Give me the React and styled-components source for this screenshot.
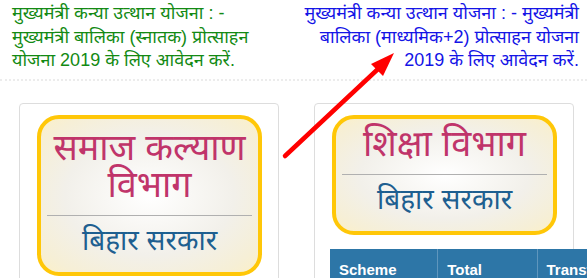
import React from "react";
import styled, { createGlobalStyle } from "styled-components";

const GlobalStyle = createGlobalStyle`
  html, body { margin: 0; padding: 0; background: #ffffff; }
  body { font-family: "Liberation Sans", "Noto Sans Devanagari", "Lohit Devanagari", "Noto Sans", sans-serif; }
`;

const Page = styled.div`
  position: relative;
  width: 587px;
  height: 278px;
  overflow: hidden;
  background: #fff;
`;

const NoticeRow = styled.div`
  display: grid;
  grid-template-columns: 278px 1fr;
  padding: 2px 8px 0 12px;
  height: 81px;
  box-sizing: border-box;
  border-bottom: 2px dotted #ececec;
`;

const Notice = styled.a`
  display: block;
  font-size: 18px;
  line-height: 23.5px;
  color: ${(p) => p.$color};
  text-align: ${(p) => p.$align};
  text-decoration: none;
  white-space: nowrap;
`;

const CardsRow = styled.div`
  display: flex;
  gap: 35px;
  padding: 22px 13px 0 19px;
`;

const Card = styled.div`
  width: 260px;
  box-sizing: border-box;
  border: 1px solid #dddddd;
  border-radius: 4px;
  padding: 11px 16px 0 17px;
  background: #fff;
  flex-shrink: 0;
`;

const Emblem = styled.div`
  border: 4px solid #ffc708;
  border-radius: 22px;
  background: radial-gradient(ellipse at center, #ffffff 0%, #f2f0ea 55%, #f6efd6 85%, #fbf0c8 100%);
  text-align: center;
  padding: ${(p) => (p.$tall ? "10px" : "6px")} 6px 14px;
`;

const Title = styled.div`
  color: #c0346a;
  font-size: 36px;
  line-height: 37px;
`;

const Rule = styled.div`
  height: 1px;
  background: #b0b0b0;
  margin: 12px 0 8px;
`;

const Sub = styled.div`
  color: #1e5f90;
  font-size: 28px;
  line-height: 34px;
`;

const Table = styled.table`
  margin: 14px 0 0 -2px;
  border-collapse: collapse;
  width: 320px;
  font-family: "Liberation Sans", Arial, sans-serif;
`;

const Th = styled.th`
  background: #2d76a7;
  color: #fff;
  font-weight: bold;
  font-size: 15px;
  line-height: 17px;
  text-align: left;
  padding: 12px 9px;
  border-left: 1px solid #5f96bd;
  width: ${(p) => p.$w}px;
  &:first-child { border-left: none; }
`;

const ArrowSvg = styled.svg`
  position: absolute;
  left: 0;
  top: 0;
  pointer-events: none;
`;

function Arrow() {
  return (
    <ArrowSvg width="587" height="278" viewBox="0 0 587 278">
      <line x1="285" y1="156" x2="378" y2="69" stroke="#ff0000" strokeWidth="4.5" strokeLinecap="round" />
      <polygon points="394,53 371,64 383,76" fill="#ff0000" />
    </ArrowSvg>
  );
}

export default function App() {
  return (
    <>
      <GlobalStyle />
      <Page>
        <NoticeRow>
          <Notice href="#" $color="#138a13" $align="left">
            मुख्यमंत्री कन्या उत्थान योजना : -<br />
            मुख्यमंत्री बालिका (स्नातक) प्रोत्साहन<br />
            योजना 2019 के लिए आवेदन करें.
          </Notice>
          <Notice href="#" $color="#1414e6" $align="right">
            मुख्यमंत्री कन्या उत्थान योजना : - मुख्यमंत्री<br />
            बालिका (माध्यमिक+2) प्रोत्साहन योजना<br />
            2019 के लिए आवेदन करें.
          </Notice>
        </NoticeRow>
        <CardsRow>
          <Card>
            <Emblem $tall>
              <Title>समाज कल्याण<br />विभाग</Title>
              <Rule />
              <Sub>बिहार सरकार</Sub>
            </Emblem>
          </Card>
          <Card>
            <Emblem>
              <Title>शिक्षा विभाग</Title>
              <Rule />
              <Sub>बिहार सरकार</Sub>
            </Emblem>
            <Table>
              <thead>
                <tr>
                  <Th $w={105}>Scheme</Th>
                  <Th $w={103}>Total</Th>
                  <Th $w={112}>Transfer</Th>
                </tr>
              </thead>
            </Table>
          </Card>
        </CardsRow>
        <Arrow />
      </Page>
    </>
  );
}
